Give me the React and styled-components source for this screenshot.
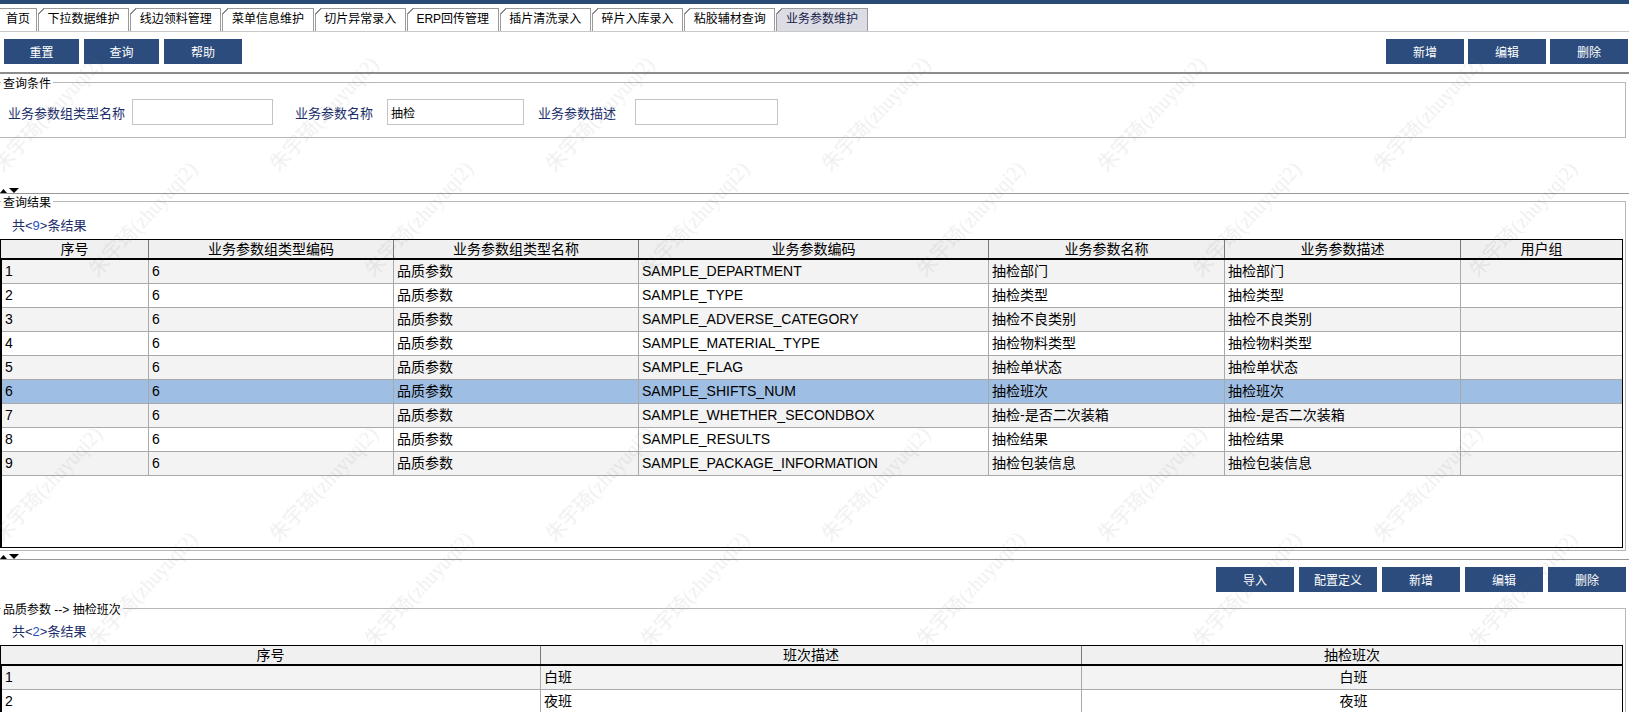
import React from "react";
import styled, { createGlobalStyle } from "styled-components";

const FONT = `"Liberation Sans", "Noto Sans CJK SC", sans-serif`;
const NAVY = "#2b4c7c";

const GlobalStyle = createGlobalStyle`
  html, body { margin: 0; padding: 0; background: #fff; overflow: hidden; }
  body { font-family: ${FONT}; color: #000; }
  * { box-sizing: border-box; }
`;

const Page = styled.div`
  position: relative;
  width: 1629px;
  display: flex;
  flex-direction: column;
`;

const TopBar = styled.div`
  height: 4px;
  background: #274a77;
`;

const TabStrip = styled.div`
  display: flex;
  align-items: flex-end;
  height: 28px;
  border-bottom: 1px solid #c8c8c8;
`;

const Tab = styled.div`
  position: relative;
  height: 23px;
  padding: 0 ${(p) => (p.$first ? "6px" : "8.6px")};
  border: 1px solid #9a9a9a;
  border-bottom: none;
  border-left: ${(p) => (p.$first ? "none" : "1px solid #9a9a9a")};
  margin-right: 1px;
  background: ${(p) => (p.$active ? "#dcdce4" : "#fff")};
  font-size: 12px;
  line-height: 21px;
  white-space: nowrap;
  color: ${(p) => (p.$active ? "#14204a" : "#000")};
  &::before {
    content: "";
    display: ${(p) => (p.$first ? "none" : "block")};
    position: absolute;
    left: -1px;
    top: -1px;
    width: 6px;
    height: 6px;
    background: linear-gradient(
      to bottom right,
      #fff 0 48%,
      #8a8a8a 48% 62%,
      transparent 62%
    );
  }
`;

const Toolbar = styled.div`
  display: flex;
  justify-content: space-between;
  padding: 7px 1px 8px 4px;
  border-bottom: 2px solid #8c8c8c;
`;

const BottomBar = styled.div`
  display: flex;
  justify-content: flex-end;
  padding: 7px 3px 0 0;
`;

const ButtonGroup = styled.div`
  display: flex;
  gap: ${(p) => p.$gap}px;
`;

const Button = styled.button`
  width: ${(p) => p.$w || 78}px;
  height: 25px;
  padding: 0;
  border: none;
  background: ${NAVY};
  color: #fff;
  font-family: ${FONT};
  font-size: 12px;
  cursor: pointer;
`;

const Fieldset = styled.fieldset`
  margin: ${(p) => p.$mt || 0}px 3px 0 0;
  padding: 0 0 ${(p) => p.$pb || 0}px 0;
  min-width: 0;
  border: 1px solid #b8b8b8;
  border-left: none;
`;

const Legend = styled.legend`
  margin-left: 1px;
  padding: 0 2px;
  height: 14px;
  font-size: 12px;
  line-height: 19px;
  color: #000;
`;

const FormRow = styled.div`
  display: flex;
  align-items: center;
  padding: 10px 0 12px 8px;
`;

const Label = styled.span`
  font-size: 13px;
  color: #1b2d6b;
  margin-right: ${(p) => p.$mr}px;
  white-space: nowrap;
`;

const TextInput = styled.input`
  width: ${(p) => p.$w}px;
  height: 26px;
  margin-right: ${(p) => p.$mr || 0}px;
  padding: 0 3px;
  border: 1px solid #c4c4c4;
  background: #fff;
  font-family: ${FONT};
  font-size: 12px;
  color: #000;
  outline: none;
`;

const Splitter = styled.div`
  margin-top: ${(p) => p.$mt}px;
  height: 6px;
  border-bottom: 1px solid #999;
  display: flex;
  align-items: flex-end;
`;

const Count = styled.div`
  padding: ${(p) => p.$pt}px 0 0 12px;
  font-size: 13px;
  line-height: 14px;
  color: #1b2d6b;
`;

const CountNum = styled.span`
  color: #1f55c6;
`;

const Table = styled.div`
  width: 1623px;
  margin-top: 6px;
`;

const HeadRow = styled.div`
  display: grid;
  grid-template-columns: ${(p) => p.$cols};
  background: #f0f0f0;
  border-top: 1px solid #000;
  border-left: 1px solid #000;
  border-right: 1px solid #000;
`;

const HeadCell = styled.div`
  height: 18px;
  line-height: 18px;
  font-size: 14px;
  text-align: center;
  white-space: nowrap;
  overflow: hidden;
  border-right: 1px solid #7a7a7a;
  &:last-child { border-right: none; }
`;

const Body = styled.div`
  height: ${(p) => p.$h}px;
  overflow: hidden;
  border-top: 2px solid #000;
  border-left: 2px solid #000;
  border-right: 1px solid #000;
  border-bottom: 1px solid #000;
  background: #fff;
`;

const Row = styled.div`
  display: grid;
  grid-template-columns: ${(p) => p.$cols};
  background: ${(p) => (p.$selected ? "#9fbee3" : p.$alt ? "#f3f3f3" : "#fff")};
  border-bottom: 1px solid #a9a9a9;
`;

const Cell = styled.div`
  height: 23px;
  line-height: 23px;
  padding-left: 3px;
  font-size: 14px;
  text-align: ${(p) => (p.$center ? "center" : "left")};
  white-space: nowrap;
  overflow: hidden;
  border-right: 1px solid #a9a9a9;
  &:last-child { border-right: none; }
`;

const WatermarkLayer = styled.div`
  position: fixed;
  inset: 0;
  pointer-events: none;
  overflow: hidden;
  z-index: 10;
`;

const WatermarkText = styled.span`
  position: absolute;
  font-family: "Liberation Serif", "Noto Sans CJK SC", serif;
  font-size: 20px;
  line-height: 20px;
  white-space: nowrap;
  color: rgba(110, 110, 110, 0.11);
  transform: rotate(-47deg);
  transform-origin: 0 100%;
`;

const tabs = [
  "首页",
  "下拉数据维护",
  "线边领料管理",
  "菜单信息维护",
  "切片异常录入",
  "ERP回传管理",
  "插片清洗录入",
  "碎片入库录入",
  "粘胶辅材查询",
  "业务参数维护",
];

const rows = [
  ["SAMPLE_DEPARTMENT", "抽检部门"],
  ["SAMPLE_TYPE", "抽检类型"],
  ["SAMPLE_ADVERSE_CATEGORY", "抽检不良类别"],
  ["SAMPLE_MATERIAL_TYPE", "抽检物料类型"],
  ["SAMPLE_FLAG", "抽检单状态"],
  ["SAMPLE_SHIFTS_NUM", "抽检班次"],
  ["SAMPLE_WHETHER_SECONDBOX", "抽检-是否二次装箱"],
  ["SAMPLE_RESULTS", "抽检结果"],
  ["SAMPLE_PACKAGE_INFORMATION", "抽检包装信息"],
];

const heads1 = [
  "序号",
  "业务参数组类型编码",
  "业务参数组类型名称",
  "业务参数编码",
  "业务参数名称",
  "业务参数描述",
  "用户组",
];

const COLS1_HEAD = "148px 245px 245px 350px 236px 236px 1fr";
const COLS1_BODY = "147px 245px 245px 350px 236px 236px 1fr";
const COLS2_HEAD = "540px 541px 1fr";
const COLS2_BODY = "539px 541px 1fr";

const Arrows = () => (
  <svg width="20" height="6" viewBox="0 0 20 6">
    <polygon points="0,6 3.5,2 7,6" fill="#000" />
    <polygon points="9,1 19,1 14,6" fill="#000" />
  </svg>
);

const marks = [];
for (let m = -1; m <= 2; m++) {
  for (let k = -1; k <= 6; k++) {
    marks.push({ x: 5 + 276 * k, y: 175 + 370 * m });
    marks.push({ x: 100 + 276 * k, y: 280 + 370 * m });
  }
}

export default function App() {
  return (
    <>
      <GlobalStyle />
      <Page>
        <TopBar />
        <TabStrip>
          {tabs.map((t, i) => (
            <Tab key={t} $first={i === 0} $active={i === tabs.length - 1}>
              {t}
            </Tab>
          ))}
        </TabStrip>

        <Toolbar>
          <ButtonGroup $gap={5}>
            <Button $w={75}>重置</Button>
            <Button $w={75}>查询</Button>
            <Button $w={78}>帮助</Button>
          </ButtonGroup>
          <ButtonGroup $gap={4}>
            <Button>新增</Button>
            <Button>编辑</Button>
            <Button>删除</Button>
          </ButtonGroup>
        </Toolbar>

        <Fieldset $mt={1}>
          <Legend>查询条件</Legend>
          <FormRow>
            <Label $mr={7}>业务参数组类型名称</Label>
            <TextInput $w={141} $mr={22} />
            <Label $mr={14}>业务参数名称</Label>
            <TextInput $w={137} $mr={14} defaultValue="抽检" />
            <Label $mr={19}>业务参数描述</Label>
            <TextInput $w={143} />
          </FormRow>
        </Fieldset>

        <Splitter $mt={50}>
          <Arrows />
        </Splitter>

        <Fieldset $pb={2}>
          <Legend>查询结果</Legend>
          <Count $pt={11}>
            共&lt;<CountNum>9</CountNum>&gt;条结果
          </Count>
          <Table>
            <HeadRow $cols={COLS1_HEAD}>
              {heads1.map((h) => (
                <HeadCell key={h}>{h}</HeadCell>
              ))}
            </HeadRow>
            <Body $h={290}>
              {rows.map(([code, name], i) => (
                <Row
                  key={code}
                  $cols={COLS1_BODY}
                  $alt={i % 2 === 0}
                  $selected={i === 5}
                >
                  <Cell>{i + 1}</Cell>
                  <Cell>6</Cell>
                  <Cell>品质参数</Cell>
                  <Cell>{code}</Cell>
                  <Cell>{name}</Cell>
                  <Cell>{name}</Cell>
                  <Cell />
                </Row>
              ))}
            </Body>
          </Table>
        </Fieldset>

        <Splitter $mt={3}>
          <Arrows />
        </Splitter>

        <BottomBar>
          <ButtonGroup $gap={5}>
            <Button>导入</Button>
            <Button>配置定义</Button>
            <Button>新增</Button>
            <Button>编辑</Button>
            <Button>删除</Button>
          </ButtonGroup>
        </BottomBar>

        <Fieldset $mt={9}>
          <Legend>品质参数 --&gt; 抽检班次</Legend>
          <Count $pt={10}>
            共&lt;<CountNum>2</CountNum>&gt;条结果
          </Count>
          <Table>
            <HeadRow $cols={COLS2_HEAD}>
              <HeadCell>序号</HeadCell>
              <HeadCell>班次描述</HeadCell>
              <HeadCell>抽检班次</HeadCell>
            </HeadRow>
            <Body $h={160}>
              <Row $cols={COLS2_BODY} $alt>
                <Cell>1</Cell>
                <Cell>白班</Cell>
                <Cell $center>白班</Cell>
              </Row>
              <Row $cols={COLS2_BODY}>
                <Cell>2</Cell>
                <Cell>夜班</Cell>
                <Cell $center>夜班</Cell>
              </Row>
            </Body>
          </Table>
        </Fieldset>
      </Page>

      <WatermarkLayer>
        {marks.map((p, i) => (
          <WatermarkText key={i} style={{ left: p.x, top: p.y - 20 }}>
            朱宇琦(zhuyuqi2)
          </WatermarkText>
        ))}
      </WatermarkLayer>
    </>
  );
}
